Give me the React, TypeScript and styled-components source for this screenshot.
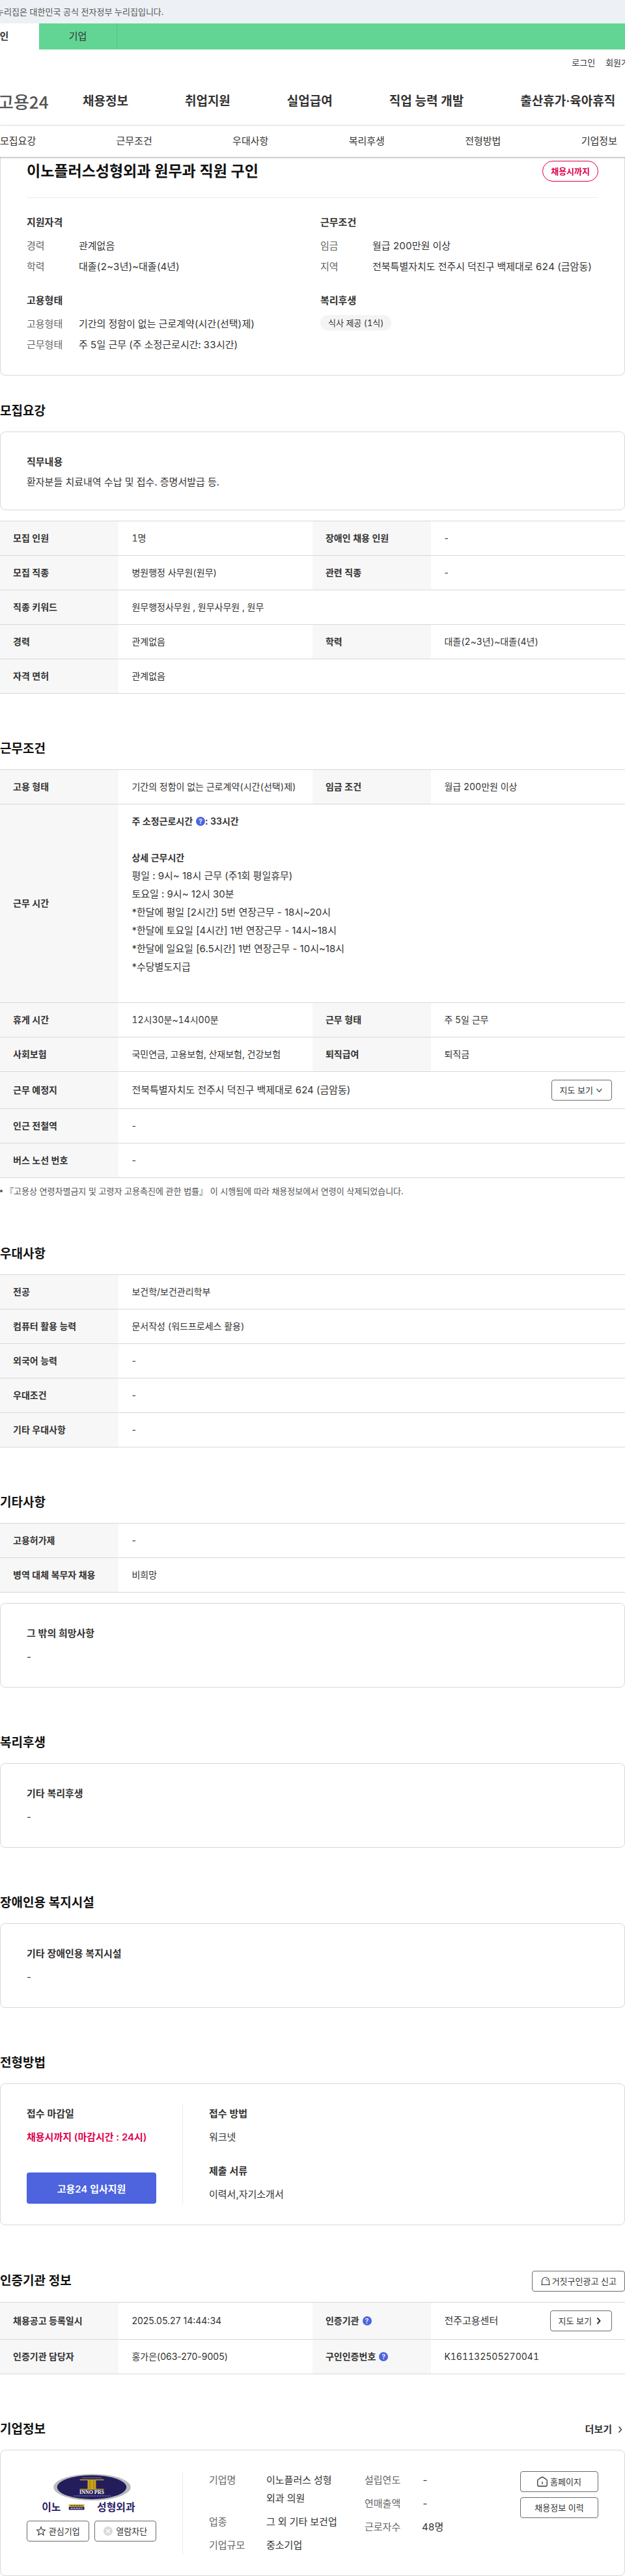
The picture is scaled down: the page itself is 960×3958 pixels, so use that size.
import React from "react";
import styled, { createGlobalStyle, css } from "styled-components";

const color = {
  text: "#333333",
  strong: "#111111",
  label: "#666666",
  line: "#d8d8d8",
  softLine: "#ebebeb",
  head: "#f7f7f7",
  blue: "#4d64de",
  pink: "#e0004d",
  green: "#62d594",
};

const GlobalStyle = createGlobalStyle`
  *, *::before, *::after { box-sizing: border-box; }
  body {
    margin: 0;
    background: #ffffff;
    color: ${color.text};
    font-family: Inter, "Noto Sans CJK KR", sans-serif;
    font-size: 15px;
    line-height: 28px;
    overflow-x: hidden;
  }
  h1, h2, h3, p, dl, dd, dt, ul { margin: 0; padding: 0; font-weight: inherit; }
  ul { list-style: none; }
  a { color: inherit; text-decoration: none; }
  button { font-family: inherit; cursor: pointer; }
`;

/* ---------- header ---------- */

const GovBar = styled.div`
  background: #edf1f5;
  height: 36px;
  line-height: 36px;
  overflow: hidden;
  font-size: 13px;
  color: #555555;
`;

const GovText = styled.p`
  margin-left: -6px;
  white-space: nowrap;
`;

const MemberTabs = styled.nav`
  display: flex;
  height: 40px;
  overflow: hidden;
  background: ${color.green};
`;

const MemberTab = styled.a<{ $active?: boolean }>`
  flex: none;
  width: 120px;
  line-height: 40px;
  text-align: center;
  border-right: 1px solid #55c585;
  ${(p) =>
    p.$active &&
    css`
      margin-left: -60px;
      background: #ffffff;
      border-right-color: #ffffff;
      font-weight: 600;
    `}
`;

const TopArea = styled.div`
  height: 117px;
  overflow: hidden;
  border-bottom: 1px solid ${color.softLine};
`;

const UtilLinks = styled.div`
  display: flex;
  justify-content: flex-end;
  gap: 16px;
  margin-right: -18px;
  padding-top: 8px;
  font-size: 13px;
  line-height: 24px;
`;

const MainNav = styled.nav`
  display: flex;
  align-items: center;
  gap: 87px;
  padding-top: 28px;
  font-size: 19px;
  font-weight: 600;
  line-height: 40px;
  white-space: nowrap;
`;

const Logo = styled.a`
  width: 43px;
  margin-left: -3px;
  font-family: "Noto Sans CJK KR", sans-serif;
  font-size: 26px;
  font-weight: 500;
  color: #555555;
`;

const SubNav = styled.nav`
  position: relative;
  display: flex;
  justify-content: space-between;
  padding-right: 12px;
  line-height: 48px;
  background: #ffffff;
  box-shadow: 0 1px 3px rgba(0, 0, 0, 0.35);
`;

/* ---------- building blocks ---------- */

const Card = styled.div<{ $attached?: boolean }>`
  padding: 32px 40px;
  border: 1px solid ${color.line};
  border-radius: 8px;
  ${(p) =>
    p.$attached &&
    css`
      padding-top: 6px;
      border-top: 0;
      border-radius: 0 0 8px 8px;
    `}
`;

const Section = styled.section<{ $near?: boolean }>`
  padding-top: ${(p) => (p.$near ? 40 : 70)}px;
`;

const SectionHead = styled.div`
  display: flex;
  align-items: center;
  justify-content: space-between;
  min-height: 30px;
  margin-bottom: 16px;
`;

const SectionTitle = styled.h2`
  font-size: 19px;
  font-weight: 600;
  line-height: 30px;
  color: ${color.strong};
`;

const Stack = styled.div<{ $gap: number }>`
  display: flex;
  flex-direction: column;
  gap: ${(p) => p.$gap}px;
`;

const SubTitle = styled.h3`
  font-size: 15px;
  font-weight: 600;
`;

const CompactText = styled.p`
  margin-top: 7px;
  line-height: 20px;
`;

const OutlineButton = styled.button<{ $block?: boolean }>`
  display: inline-flex;
  align-items: center;
  justify-content: center;
  gap: ${(p) => (p.$block ? 4 : 2)}px;
  flex: ${(p) => (p.$block ? "1 1 0" : "none")};
  height: 32px;
  padding: 0 ${(p) => (p.$block ? 0 : 12)}px;
  border: 1px solid #6b6b6b;
  border-radius: 4px;
  background: #ffffff;
  color: ${color.text};
  font-size: 13px;
  line-height: 28px;
  white-space: nowrap;
`;

const HelpDot = styled.button`
  width: 14px;
  height: 14px;
  margin-left: 5px;
  padding: 0;
  border: 0;
  border-radius: 50%;
  background: ${color.blue};
  color: #ffffff;
  font-size: 10px;
  font-weight: 600;
  line-height: 14px;
  text-align: center;
  vertical-align: 1px;
`;

const Icon = styled.svg<{ $size?: number }>`
  flex: none;
  width: ${(p) => p.$size ?? 16}px;
  height: ${(p) => p.$size ?? 16}px;
  fill: none;
  stroke: currentColor;
`;

/* ---------- summary card ---------- */

const SummaryHead = styled.div`
  display: flex;
  align-items: center;
  justify-content: space-between;
  padding-bottom: 24px;
  border-bottom: 1px solid ${color.softLine};
`;

const JobTitle = styled.h1`
  font-size: 23px;
  font-weight: 600;
  line-height: 32px;
  color: ${color.strong};
`;

const Badge = styled.span`
  padding: 0 12px;
  border: 1px solid ${color.pink};
  border-radius: 16px;
  color: ${color.pink};
  font-size: 13px;
  font-weight: 600;
  line-height: 30px;
`;

const SummaryGrid = styled.div`
  display: grid;
  grid-template-columns: 1fr 1fr;
  gap: 24px;
  padding-top: 24px;
`;

const Facts = styled.dl<{ $gap: number; $label: number }>`
  display: flex;
  flex-direction: column;
  gap: ${(p) => p.$gap}px;
  flex: 1;
  min-width: 0;
  --label: ${(p) => p.$label}px;
`;

const Fact = styled.div`
  display: grid;
  grid-template-columns: var(--label) 1fr;
  dt {
    color: ${color.label};
  }
  dd {
    font-variant-numeric: tabular-nums;
  }
`;

const Chip = styled.span`
  align-self: flex-start;
  padding: 0 12px;
  border-radius: 12px;
  background: #f4f4f4;
  font-size: 13px;
  font-variant-numeric: tabular-nums;
  line-height: 24px;
`;

/* ---------- data tables ---------- */

const Table = styled.table<{ $spaced?: boolean }>`
  width: 100%;
  margin-top: ${(p) => (p.$spaced ? 16 : 0)}px;
  border-collapse: separate;
  border-spacing: 0;
  border-top: 1px solid ${color.line};
  table-layout: fixed;
  font-size: 14px;
  th,
  td {
    padding: 12px 20px;
    border-bottom: 1px solid ${color.line};
    text-align: left;
    font-weight: 400;
    white-space: nowrap;
  }
  th {
    background: ${color.head};
    font-weight: 600;
  }
`;

const ValueCell = styled.td<{ $tabular: boolean }>`
  font-variant-numeric: ${(p) => (p.$tabular ? "tabular-nums" : "normal")};
`;

const CellBar = styled.div`
  display: flex;
  align-items: center;
  justify-content: space-between;
  font-size: 15px;
`;

const CellTitle = styled.p`
  font-weight: 600;
`;

const WorkHours = styled.div`
  font-size: 15px;
  white-space: pre-line;
`;

const Gap = styled.div`
  height: 28px;
`;

const Footnote = styled.ul`
  margin-top: 8px;
  color: #555555;
  font-size: 13px;
  line-height: 24px;
  li {
    display: flex;
    align-items: center;
    gap: 4px;
  }
  li::before {
    content: "";
    width: 4px;
    height: 4px;
    border-radius: 50%;
    background: #555555;
  }
`;

/* ---------- split cards ---------- */

const Split = styled.div`
  display: flex;
`;

const SplitSide = styled.div`
  display: flex;
  flex-direction: column;
  justify-content: space-between;
  flex: none;
  width: 240px;
  padding-right: 40px;
  border-right: 1px solid ${color.softLine};
`;

const SplitBody = styled.div`
  display: flex;
  flex: 1;
  gap: 40px;
  min-width: 0;
  padding-left: 40px;
`;

const Deadline = styled.p`
  color: ${color.pink};
  font-weight: 600;
`;

const ApplyButton = styled.button`
  width: 100%;
  height: 48px;
  border: 0;
  border-radius: 4px;
  background: ${color.blue};
  color: #ffffff;
  font-size: 15px;
  font-weight: 600;
`;

const ButtonRow = styled.div`
  display: flex;
  gap: 8px;
  margin-bottom: 20px;
`;

const ButtonColumn = styled.div`
  display: grid;
  align-content: start;
  flex: none;
  gap: 8px;
  width: 120px;
`;

const MoreLink = styled.a`
  display: inline-flex;
  align-items: center;
  gap: 4px;
  font-weight: 600;
`;

const CompanyMark = styled.svg`
  width: 100%;
  height: 68px;
`;

/* ---------- parts ---------- */

type Cell = { label: React.ReactNode; value: React.ReactNode };

/* Times and phone numbers keep proportional figures so their punctuation stays tight. */
const isTabular = (value: React.ReactNode) =>
  typeof value === "string" && !/[-:]/.test(value);

const Grid = ({ rows, spaced }: { rows: Cell[][]; spaced?: boolean }) => (
  <Table $spaced={spaced}>
    <colgroup>
      <col width="19%" />
      <col width="31%" />
      <col width="19%" />
      <col width="31%" />
    </colgroup>
    <tbody>
      {rows.map((cells, i) => (
        <tr key={i}>
          {cells.map((c, j) => (
            <React.Fragment key={j}>
              <th scope="row">{c.label}</th>
              <ValueCell colSpan={cells.length === 1 ? 3 : 1} $tabular={isTabular(c.value)}>
                {c.value}
              </ValueCell>
            </React.Fragment>
          ))}
        </tr>
      ))}
    </tbody>
  </Table>
);

const FactList = ({
  items,
  gap,
  label,
}: {
  items: [string, string][];
  gap: number;
  label: number;
}) => (
  <Facts $gap={gap} $label={label}>
    {items.map(([name, value]) => (
      <Fact key={name}>
        <dt>{name}</dt>
        <dd>{value}</dd>
      </Fact>
    ))}
  </Facts>
);

const Help = ({ about }: { about: string }) => (
  <HelpDot type="button" aria-label={`${about} 도움말`}>
    ?
  </HelpDot>
);

const ChevronDown = () => (
  <Icon viewBox="0 0 16 16" strokeWidth="1.3" $size={14}>
    <path d="M4 5.5 8.5 11 13 5.5" />
  </Icon>
);

const ChevronRight = ({ bold }: { bold?: boolean }) => (
  <Icon viewBox="0 0 16 16" strokeWidth={bold ? 2 : 1.4}>
    <path d="M6.5 3.5 10.5 8 6.5 12.5" />
  </Icon>
);

const SirenIcon = () => (
  <Icon viewBox="0 0 16 16" strokeWidth="1.1">
    <path d="M2.5 13.5V7.8a5.5 5.5 0 0 1 11 0v5.7M1.2 13.5h13.6M8.5 5.2a2.6 2.6 0 0 1 2.2 2.3" />
  </Icon>
);

const HomeIcon = () => (
  <Icon viewBox="0 0 16 16" strokeWidth="1.3">
    <path d="M.8 6.2c0-.6.3-1.1.8-1.4L7.2 1.1c.5-.3 1.1-.3 1.6 0l5.6 3.7c.5.3.8.8.8 1.4v7.2c0 .9-.7 1.6-1.6 1.6H2.4c-.9 0-1.6-.7-1.6-1.6zM8 8v4" />
  </Icon>
);

const StarIcon = () => (
  <Icon viewBox="0 0 16 16" strokeWidth="1.1">
    <path d="m8 1.6 1.8 4.3 4.6.4-3.5 3.1 1.1 4.6L8 11.6l-4 2.4 1.1-4.6-3.5-3.1 4.6-.4z" />
  </Icon>
);

const BlockIcon = () => (
  <Icon viewBox="0 0 16 16" strokeWidth="1.5">
    <circle cx="8" cy="8" r="7" fill="#d9d9d9" stroke="none" />
    <path d="m5 5 6 6M11 5l-6 6" stroke="#ffffff" />
  </Icon>
);

const CompanyLogo = () => (
  <CompanyMark viewBox="0 0 200 68" role="img" aria-label="이노플러스 성형외과">
    <ellipse cx="101" cy="24.5" rx="59.5" ry="20.5" fill="#b9bbbd" />
    <ellipse cx="100.5" cy="24.5" rx="53.5" ry="18.5" fill="#241d5c" />
    <path d="M86 10h30" stroke="#a5a3c0" strokeWidth="1" strokeDasharray="2 1" />
    <path d="M82 12.5h37V14H82zM82 27h37v1.5H82zM94 14h13v13H94z" fill="#c6a11d" />
    <path d="M97.5 14v13M103.5 14v13" stroke="#8f7420" strokeWidth="1" />
    <text
      x="100.5"
      y="35.5"
      fontFamily="Liberation Serif, serif"
      fontSize="8"
      fontWeight="700"
      fill="#ffffff"
      textAnchor="middle"
    >
      INNO PRS
    </text>
    <path d="M72 38h58" stroke="#8a87ae" strokeWidth="1" strokeDasharray="3 1" />
    <g fontFamily="Noto Sans CJK KR, sans-serif" fontWeight="700" fill="#2b2466" textAnchor="middle">
      <text x="38" y="61" fontSize="16">
        이노
      </text>
      <text x="138" y="61" fontSize="16">
        성형외과
      </text>
    </g>
    <rect x="65" y="51" width="24" height="4.5" fill="#d0a92a" />
    <rect x="65" y="55" width="24" height="4.5" fill="#2b2466" />
    <path d="M68 53.2h18" stroke="#5a4a3a" strokeWidth="1.5" strokeDasharray="3 1" />
    <path d="M68 57.2h18" stroke="#c8c6dc" strokeWidth="1.5" strokeDasharray="3 1" />
  </CompanyMark>
);

const mainMenu = ["채용정보", "취업지원", "실업급여", "직업 능력 개발", "출산휴가·육아휴직"];
const subMenu = ["모집요강", "근무조건", "우대사항", "복리후생", "전형방법", "기업정보"];

const schedule = `평일 : 9시~ 18시 근무 (주1회 평일휴무)
토요일 : 9시~ 12시 30분
*한달에 평일 [2시간] 5번 연장근무 - 18시~20시
*한달에 토요일 [4시간] 1번 연장근무 - 14시~18시
*한달에 일요일 [6.5시간] 1번 연장근무 - 10시~18시
*수당별도지급`;

export default function App() {
  return (
    <>
      <GlobalStyle />
      <header>
        <GovBar>
          <GovText>누리집은 대한민국 공식 전자정부 누리집입니다.</GovText>
        </GovBar>
        <MemberTabs>
          <MemberTab href="#person" $active>
            개인
          </MemberTab>
          <MemberTab href="#company-member">기업</MemberTab>
        </MemberTabs>
        <TopArea>
          <UtilLinks>
            <a href="#login">로그인</a>
            <a href="#join">회원가입</a>
          </UtilLinks>
          <MainNav>
            <Logo href="#home">고용24</Logo>
            {mainMenu.map((m) => (
              <a key={m} href={`#${m}`}>
                {m}
              </a>
            ))}
          </MainNav>
        </TopArea>
        <SubNav>
          {subMenu.map((m) => (
            <a key={m} href={`#${m}`}>
              {m}
            </a>
          ))}
        </SubNav>
      </header>

      <main>
        <Card $attached>
          <SummaryHead>
            <JobTitle>이노플러스성형외과 원무과 직원 구인</JobTitle>
            <Badge>채용시까지</Badge>
          </SummaryHead>
          <SummaryGrid>
            <Stack $gap={8}>
              <SubTitle>지원자격</SubTitle>
              <FactList
                gap={4}
                label={80}
                items={[
                  ["경력", "관계없음"],
                  ["학력", "대졸(2~3년)~대졸(4년)"],
                ]}
              />
            </Stack>
            <Stack $gap={8}>
              <SubTitle>근무조건</SubTitle>
              <FactList
                gap={4}
                label={80}
                items={[
                  ["임금", "월급 200만원 이상"],
                  ["지역", "전북특별자치도 전주시 덕진구 백제대로 624 (금암동)"],
                ]}
              />
            </Stack>
            <Stack $gap={8}>
              <SubTitle>고용형태</SubTitle>
              <FactList
                gap={4}
                label={80}
                items={[
                  ["고용형태", "기간의 정함이 없는 근로계약(시간(선택)제)"],
                  ["근무형태", "주 5일 근무 (주 소정근로시간: 33시간)"],
                ]}
              />
            </Stack>
            <Stack $gap={8}>
              <SubTitle>복리후생</SubTitle>
              <Chip>식사 제공 (1식)</Chip>
            </Stack>
          </SummaryGrid>
        </Card>

        <Section id="모집요강" $near>
          <SectionHead>
            <SectionTitle>모집요강</SectionTitle>
          </SectionHead>
          <Card>
            <SubTitle>직무내용</SubTitle>
            <CompactText>환자분들 치료내역 수납 및 접수. 증명서발급 등.</CompactText>
          </Card>
          <Grid
            spaced
            rows={[
              [
                { label: "모집 인원", value: "1명" },
                { label: "장애인 채용 인원", value: "-" },
              ],
              [
                { label: "모집 직종", value: "병원행정 사무원(원무)" },
                { label: "관련 직종", value: "-" },
              ],
              [{ label: "직종 키워드", value: "원무행정사무원 , 원무사무원 , 원무" }],
              [
                { label: "경력", value: "관계없음" },
                { label: "학력", value: "대졸(2~3년)~대졸(4년)" },
              ],
              [{ label: "자격 면허", value: "관계없음" }],
            ]}
          />
        </Section>

        <Section id="근무조건">
          <SectionHead>
            <SectionTitle>근무조건</SectionTitle>
          </SectionHead>
          <Grid
            rows={[
              [
                { label: "고용 형태", value: "기간의 정함이 없는 근로계약(시간(선택)제)" },
                { label: "임금 조건", value: "월급 200만원 이상" },
              ],
              [
                {
                  label: "근무 시간",
                  value: (
                    <>
                      <CellTitle>
                        주 소정근로시간
                        <Help about="주 소정근로시간" />: 33시간
                      </CellTitle>
                      <Gap />
                      <CellTitle>상세 근무시간</CellTitle>
                      <WorkHours>{schedule}</WorkHours>
                      <Gap />
                    </>
                  ),
                },
              ],
              [
                { label: "휴게 시간", value: "12시30분~14시00분" },
                { label: "근무 형태", value: "주 5일 근무" },
              ],
              [
                { label: "사회보험", value: "국민연금, 고용보험, 산재보험, 건강보험" },
                { label: "퇴직급여", value: "퇴직금" },
              ],
              [
                {
                  label: "근무 예정지",
                  value: (
                    <CellBar>
                      전북특별자치도 전주시 덕진구 백제대로 624 (금암동)
                      <OutlineButton type="button">
                        지도 보기
                        <ChevronDown />
                      </OutlineButton>
                    </CellBar>
                  ),
                },
              ],
              [{ label: "인근 전철역", value: "-" }],
              [{ label: "버스 노선 번호", value: "-" }],
            ]}
          />
          <Footnote>
            <li>
              『고용상 연령차별금지 및 고령자 고용촉진에 관한 법률』 이 시행됨에 따라 채용정보에서 연령이 삭제되었습니다.
            </li>
          </Footnote>
        </Section>

        <Section id="우대사항">
          <SectionHead>
            <SectionTitle>우대사항</SectionTitle>
          </SectionHead>
          <Grid
            rows={[
              [{ label: "전공", value: "보건학/보건관리학부" }],
              [{ label: "컴퓨터 활용 능력", value: "문서작성 (워드프로세스 활용)" }],
              [{ label: "외국어 능력", value: "-" }],
              [{ label: "우대조건", value: "-" }],
              [{ label: "기타 우대사항", value: "-" }],
            ]}
          />
        </Section>

        <Section>
          <SectionHead>
            <SectionTitle>기타사항</SectionTitle>
          </SectionHead>
          <Stack $gap={16}>
            <Grid
              rows={[
                [{ label: "고용허가제", value: "-" }],
                [{ label: "병역 대체 복무자 채용", value: "비희망" }],
              ]}
            />
            <Card>
              <Stack $gap={8}>
                <SubTitle>그 밖의 희망사항</SubTitle>
                <p>-</p>
              </Stack>
            </Card>
          </Stack>
        </Section>

        <Section id="복리후생">
          <SectionHead>
            <SectionTitle>복리후생</SectionTitle>
          </SectionHead>
          <Card>
            <Stack $gap={8}>
              <SubTitle>기타 복리후생</SubTitle>
              <p>-</p>
            </Stack>
          </Card>
        </Section>

        <Section>
          <SectionHead>
            <SectionTitle>장애인용 복지시설</SectionTitle>
          </SectionHead>
          <Card>
            <Stack $gap={8}>
              <SubTitle>기타 장애인용 복지시설</SubTitle>
              <p>-</p>
            </Stack>
          </Card>
        </Section>

        <Section id="전형방법">
          <SectionHead>
            <SectionTitle>전형방법</SectionTitle>
          </SectionHead>
          <Card>
            <Split>
              <SplitSide>
                <Stack $gap={8}>
                  <SubTitle>접수 마감일</SubTitle>
                  <Deadline>채용시까지 (마감시간 : 24시)</Deadline>
                </Stack>
                <ApplyButton type="button">고용24 입사지원</ApplyButton>
              </SplitSide>
              <SplitBody>
                <Stack $gap={24}>
                  <Stack $gap={8}>
                    <SubTitle>접수 방법</SubTitle>
                    <p>워크넷</p>
                  </Stack>
                  <Stack $gap={8}>
                    <SubTitle>제출 서류</SubTitle>
                    <p>이력서,자기소개서</p>
                  </Stack>
                </Stack>
              </SplitBody>
            </Split>
          </Card>
        </Section>

        <Section>
          <SectionHead>
            <SectionTitle>인증기관 정보</SectionTitle>
            <OutlineButton type="button">
              <SirenIcon />
              거짓구인광고 신고
            </OutlineButton>
          </SectionHead>
          <Grid
            rows={[
              [
                { label: "채용공고 등록일시", value: "2025.05.27 14:44:34" },
                {
                  label: (
                    <>
                      인증기관
                      <Help about="인증기관" />
                    </>
                  ),
                  value: (
                    <CellBar>
                      전주고용센터
                      <OutlineButton type="button">
                        지도 보기
                        <ChevronRight bold />
                      </OutlineButton>
                    </CellBar>
                  ),
                },
              ],
              [
                { label: "인증기관 담당자", value: "홍가은(063-270-9005)" },
                {
                  label: (
                    <>
                      구인인증번호
                      <Help about="구인인증번호" />
                    </>
                  ),
                  value: "K161132505270041",
                },
              ],
            ]}
          />
        </Section>

        <Section id="기업정보">
          <SectionHead>
            <SectionTitle>기업정보</SectionTitle>
            <MoreLink href="#company">
              더보기
              <ChevronRight />
            </MoreLink>
          </SectionHead>
          <Card>
            <Split>
              <SplitSide>
                <CompanyLogo />
                <ButtonRow>
                  <OutlineButton type="button" $block>
                    <StarIcon />
                    관심기업
                  </OutlineButton>
                  <OutlineButton type="button" $block>
                    <BlockIcon />
                    열람차단
                  </OutlineButton>
                </ButtonRow>
              </SplitSide>
              <SplitBody>
                <FactList
                  gap={8}
                  label={88}
                  items={[
                    ["기업명", "이노플러스 성형외과 의원"],
                    ["업종", "그 외 기타 보건업"],
                    ["기업규모", "중소기업"],
                  ]}
                />
                <FactList
                  gap={8}
                  label={88}
                  items={[
                    ["설립연도", "-"],
                    ["연매출액", "-"],
                    ["근로자수", "48명"],
                  ]}
                />
                <ButtonColumn>
                  <OutlineButton type="button" $block>
                    <HomeIcon />
                    홈페이지
                  </OutlineButton>
                  <OutlineButton type="button" $block>
                    채용정보 이력
                  </OutlineButton>
                </ButtonColumn>
              </SplitBody>
            </Split>
          </Card>
        </Section>
      </main>
    </>
  );
}
